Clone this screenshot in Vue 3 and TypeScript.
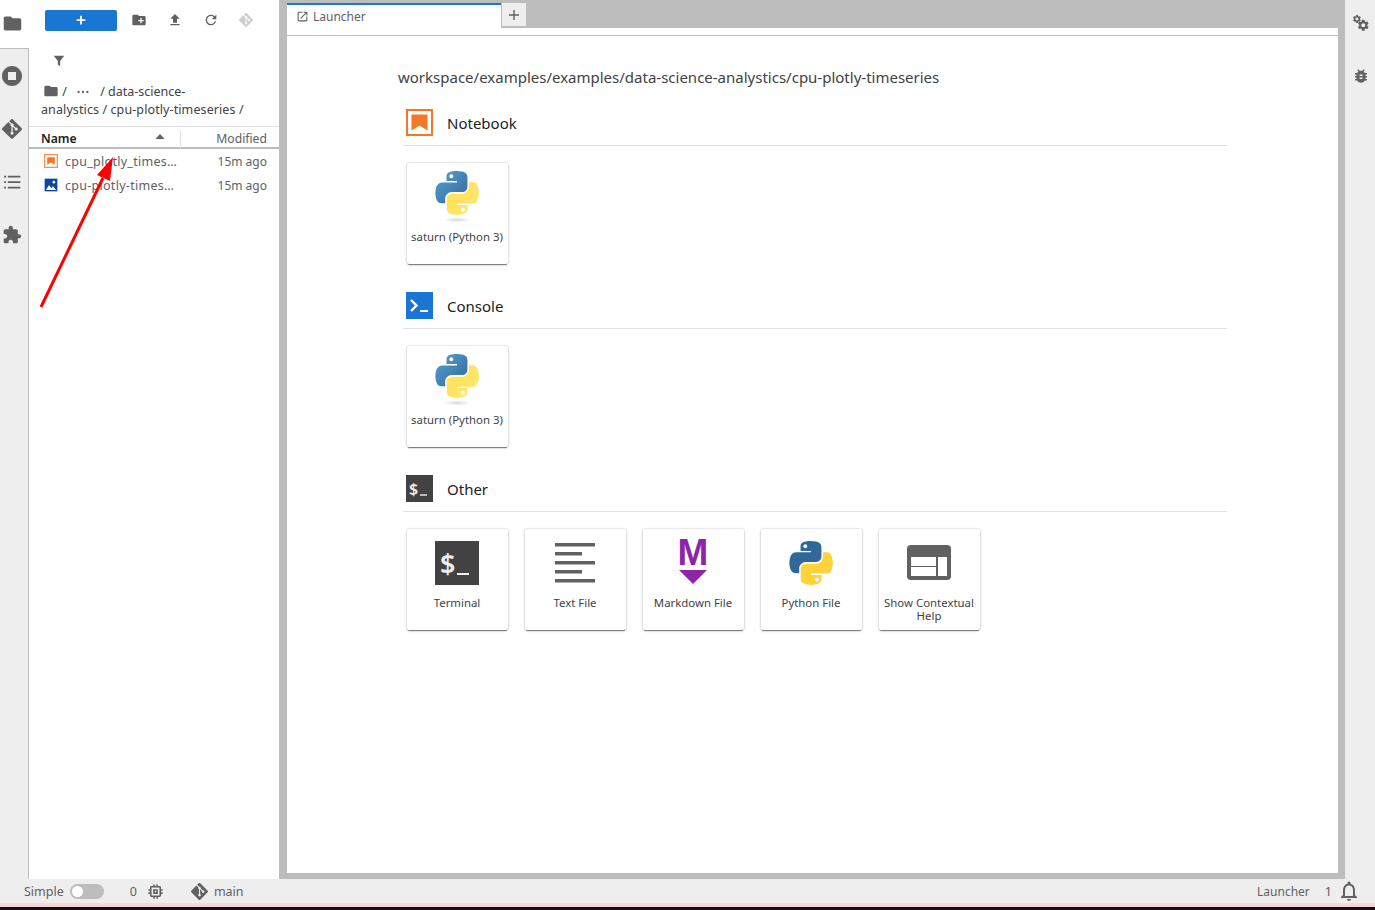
<script setup lang="ts">
type Launcher = { label: string; icon: string }
type Section = { title: string; icon: string; cards: Launcher[] }

const PY_BLUE =
  'M54.9 0c-4.6 0-9 .4-12.8 1.1C30.8 3.1 28.8 7.2 28.8 14.9v10.1h26.1v3.4H19c-7.6 0-14.2 4.6-16.3 13.2C.3 51.5.2 57.6 2.7 67.7c1.9 7.5 6.2 12.9 13.8 12.9h9v-12c0-8.7 7.5-16.3 16.4-16.3h26.1c7.3 0 13.1-6 13.1-13.3V14.9c0-7.1-6-12.4-13.1-13.6C63.4.5 59.5 0 54.9 0zM40.8 8c2.7 0 4.9 2.2 4.9 5 0 2.7-2.2 4.9-4.9 4.9-2.7 0-4.9-2.2-4.9-4.9 0-2.8 2.2-5 4.9-5z'
const PY_YELLOW =
  'M84.8 28.4V40c0 9-7.6 16.6-16.4 16.6H42.4c-7.2 0-13.1 6.1-13.1 13.3v24.9c0 7.1 6.2 11.3 13.1 13.3 8.3 2.4 16.2 2.9 26.1 0 6.6-1.9 13.1-5.8 13.1-13.3v-10H55.5v-3.3h39.1c7.6 0 10.4-5.3 13.1-13.3 2.7-8.2 2.7-16.2 0-26.9-1.9-7.7-5.5-13.3-13.1-13.3H84.8zM70.1 91.6c2.7 0 4.9 2.2 4.9 4.9 0 2.8-2.2 5-4.9 5-2.7 0-4.9-2.2-4.9-5 0-2.7 2.2-4.9 4.9-4.9z'
const GIT =
  'M23.546 10.93L13.067.452c-.604-.603-1.582-.603-2.188 0L8.708 2.627l2.76 2.76c.645-.215 1.379-.07 1.889.441.516.515.658 1.258.438 1.9l2.658 2.66c.645-.223 1.387-.078 1.9.435.721.72.721 1.884 0 2.604-.719.719-1.881.719-2.6 0-.539-.541-.674-1.337-.404-1.996L12.86 8.955v6.525c.176.086.342.203.488.348.713.721.713 1.883 0 2.6-.719.721-1.889.721-2.609 0-.719-.719-.719-1.879 0-2.598.182-.18.387-.316.605-.406V8.835c-.217-.091-.424-.222-.6-.401-.545-.545-.676-1.342-.396-2.009L7.636 3.7.45 10.881c-.6.605-.6 1.584 0 2.189l10.48 10.477c.604.604 1.582.604 2.186 0l10.43-10.43c.605-.603.605-1.582 0-2.187'
const COG =
  'M19.14 12.94c.04-.3.06-.61.06-.94 0-.32-.02-.64-.07-.94l2.03-1.58c.18-.14.23-.41.12-.61l-1.92-3.32c-.12-.22-.37-.29-.59-.22l-2.39.96c-.5-.38-1.03-.7-1.62-.94l-.36-2.54c-.04-.24-.24-.41-.48-.41h-3.84c-.24 0-.43.17-.47.41l-.36 2.54c-.59.24-1.13.57-1.62.94l-2.39-.96c-.22-.08-.47 0-.59.22L2.74 8.87c-.12.21-.08.47.12.61l2.03 1.58c-.05.3-.09.63-.09.94s.02.64.07.94l-2.03 1.58c-.18.14-.23.41-.12.61l1.92 3.32c.12.22.37.29.59.22l2.39-.96c.5.38 1.03.7 1.62.94l.36 2.54c.05.24.24.41.48.41h3.84c.24 0 .44-.17.47-.41l.36-2.54c.59-.24 1.13-.56 1.62-.94l2.39.96c.22.08.47 0 .59-.22l1.92-3.32c.12-.22.07-.47-.12-.61l-2.01-1.58zM12 15.6c-1.98 0-3.6-1.62-3.6-3.6s1.62-3.6 3.6-3.6 3.6 1.62 3.6 3.6-1.62 3.6-3.6 3.6z'

const sections: Section[] = [
  { title: 'Notebook', icon: 'notebook', cards: [{ label: 'saturn (Python 3)', icon: 'kernel' }] },
  { title: 'Console', icon: 'console', cards: [{ label: 'saturn (Python 3)', icon: 'kernel' }] },
  {
    title: 'Other',
    icon: 'terminal',
    cards: [
      { label: 'Terminal', icon: 'terminal' },
      { label: 'Text File', icon: 'text' },
      { label: 'Markdown File', icon: 'markdown' },
      { label: 'Python File', icon: 'python' },
      { label: 'Show Contextual Help', icon: 'help' },
    ],
  },
]

// names are shown shortened, the column is narrow
const files = [
  { name: 'cpu_plotly_times…', kind: 'notebook', modified: '15m ago' },
  { name: 'cpu-plotly-times…', kind: 'image', modified: '15m ago' },
]
</script>

<template>
  <div class="app">
    <div class="workspace">
      <!-- left icon rail -->
      <nav class="rail">
        <div class="rail-tab rail-tab--active">
          <svg viewBox="0 0 24 24" class="rail-icon rail-icon--folder"><path d="M10 4H4c-1.1 0-2 .9-2 2v12c0 1.1.9 2 2 2h16c1.1 0 2-.9 2-2V8c0-1.1-.9-2-2-2h-8l-2-2z" /></svg>
        </div>
        <div class="rail-tab">
          <svg viewBox="0 0 24 24" class="rail-icon rail-icon--running"><path fill-rule="evenodd" d="M12 2C6.47 2 2 6.47 2 12s4.47 10 10 10 10-4.47 10-10S17.53 2 12 2zm4 14H8V8h8v8z" /></svg>
        </div>
        <div class="rail-tab">
          <svg viewBox="0 0 24 24" class="rail-icon"><path :d="GIT" /></svg>
        </div>
        <div class="rail-tab">
          <svg viewBox="0 0 24 24" class="rail-icon"><path d="M2.5 4.4h2.4v2.2H2.5zM7 4.4h15v2.2H7zM2.5 11h2.4v2.2H2.5zM7 11h15v2.2H7zM2.5 17.6h2.4v2.2H2.5zM7 17.6h15v2.2H7z" /></svg>
        </div>
        <div class="rail-tab">
          <svg viewBox="0 0 24 24" class="rail-icon"><path d="M20.5 11H19V7c0-1.1-.9-2-2-2h-4V3.5C13 2.12 11.88 1 10.5 1S8 2.12 8 3.5V5H4c-1.1 0-1.99.9-1.99 2v3.8H3.5c1.49 0 2.7 1.21 2.7 2.7s-1.21 2.7-2.7 2.7H2V20c0 1.1.9 2 2 2h3.8v-1.5c0-1.49 1.21-2.7 2.7-2.7 1.49 0 2.7 1.21 2.7 2.7V22H17c1.1 0 2-.9 2-2v-4h1.5c1.38 0 2.5-1.12 2.5-2.5S21.88 11 20.5 11z" /></svg>
        </div>
      </nav>

      <!-- file browser -->
      <aside class="browser">
        <div class="toolbar">
          <button class="new-btn">
            <svg viewBox="0 0 16 16" class="plus"><path d="M7 3h2v4h4v2H9v4H7V9H3V7h4z" /></svg>
          </button>
          <svg viewBox="0 0 24 24" class="tool-icon"><path d="M20 6h-8l-2-2H4c-1.11 0-1.99.89-1.99 2L2 18c0 1.11.89 2 2 2h16c1.11 0 2-.89 2-2V8c0-1.11-.89-2-2-2zm-1 8h-3v3h-2v-3h-3v-2h3V9h2v3h3v2z" /></svg>
          <svg viewBox="0 0 24 24" class="tool-icon"><path d="M9 16h6v-6h4l-7-7-7 7h4zm-4 2h14v2H5z" /></svg>
          <svg viewBox="0 0 24 24" class="tool-icon"><path d="M17.65 6.35C16.2 4.9 14.21 4 12 4c-4.42 0-7.99 3.58-7.99 8s3.57 8 7.99 8c3.73 0 6.84-2.55 7.73-6h-2.08c-.82 2.33-3.04 4-5.65 4-3.31 0-6-2.69-6-6s2.69-6 6-6c1.66 0 3.14.69 4.22 1.78L13 11h7V4l-2.35 2.35z" /></svg>
          <svg viewBox="0 0 24 24" class="tool-icon tool-icon--faded"><path :d="GIT" /></svg>
        </div>
        <div class="filter">
          <svg viewBox="0 0 24 24"><path d="M14 12v9l-4-3v-6L3 3h18z" /></svg>
        </div>
        <div class="crumbs">
          <div>
            <svg viewBox="0 0 24 24" class="crumb-folder"><path d="M10 4H4c-1.1 0-2 .9-2 2v12c0 1.1.9 2 2 2h16c1.1 0 2-.9 2-2V8c0-1.1-.9-2-2-2h-8l-2-2z" /></svg>
            <span> / </span>
            <svg viewBox="0 0 16 16" class="crumb-dots"><circle cx="3" cy="8" r="1.3" /><circle cx="8" cy="8" r="1.3" /><circle cx="13" cy="8" r="1.3" /></svg>
            <span>/ data-science-</span>
          </div>
          <div class="crumb-line">analystics / cpu-plotly-timeseries /</div>
        </div>
        <div class="list-head">
          <div class="head-name">
            <span>Name</span>
            <svg viewBox="0 0 10 6" class="sort"><path d="M5 0l4.5 5H.5z" /></svg>
          </div>
          <div class="head-mod">Modified</div>
        </div>
        <div v-for="f in files" :key="f.name" class="file-row">
          <svg v-if="f.kind === 'notebook'" viewBox="0 0 22 22" class="file-icon">
            <rect x="1" y="1" width="20" height="20" fill="#fff" stroke="#f37726" stroke-width="2" opacity=".8" />
            <path d="M5 5h12v12l-6-3.5L5 17z" fill="#f37726" />
          </svg>
          <svg v-else viewBox="0 0 22 22" class="file-icon">
            <rect x="1" y="1" width="20" height="20" fill="#0d47a1" />
            <circle cx="15.5" cy="6.5" r="2" fill="#fff" />
            <path d="M3 19l5-8 3.5 5 2.5-3 5 6z" fill="#fff" />
          </svg>
          <span class="file-name">{{ f.name }}</span>
          <span class="file-mod">{{ f.modified }}</span>
        </div>
      </aside>

      <div class="splitter"></div>

      <!-- launcher -->
      <main class="main">
        <div class="tabbar">
          <div class="tab">
            <svg viewBox="0 0 24 24" class="tab-icon"><path d="M19 19H5V5h7V3H5a2 2 0 0 0-2 2v14c0 1.1.9 2 2 2h14c1.1 0 2-.9 2-2v-7h-2v7zM14 3v2h3.59l-9.83 9.83 1.41 1.41L19 6.41V10h2V3h-7z" /></svg>
            <span>Launcher</span>
          </div>
          <div class="tab-add">
            <svg viewBox="0 0 16 16"><path d="M7.3 3h1.4v4.3H13v1.4H8.7V13H7.3V8.7H3V7.3h4.3z" /></svg>
          </div>
        </div>
        <div class="launcher">
          <div class="cwd">workspace/examples/examples/data-science-analystics/cpu-plotly-timeseries</div>
          <section v-for="s in sections" :key="s.title" class="section">
            <div class="section-head">
              <svg v-if="s.icon === 'notebook'" viewBox="0 0 27 27" class="section-icon">
                <rect x="1" y="1" width="25" height="25" fill="#fff" stroke="#f37726" stroke-width="2" />
                <path d="M5.5 5.5h16v16l-8-5-8 5z" fill="#f37726" />
              </svg>
              <svg v-else-if="s.icon === 'console'" viewBox="0 0 27 27" class="section-icon">
                <rect width="27" height="27" fill="#1976d2" />
                <path d="M5 8l5.5 5.5L5 19" fill="none" stroke="#fff" stroke-width="2.4" />
                <path d="M14 19h8" stroke="#fff" stroke-width="2" />
              </svg>
              <svg v-else viewBox="0 0 27 27" class="section-icon">
                <rect width="27" height="27" fill="#424242" />
                <text x="3" y="20" class="term-text" font-size="16">$</text>
                <path d="M14 20h7" stroke="#eee" stroke-width="1.4" />
              </svg>
              <span class="section-title">{{ s.title }}</span>
            </div>
            <div class="cards">
              <div v-for="c in s.cards" :key="c.label" class="card">
                <div class="card-art">
                  <svg v-if="c.icon === 'kernel'" viewBox="0 0 110 132" class="art-kernel">
                    <defs>
                      <linearGradient id="pyb" x1="0" y1="0" x2="1" y2="1">
                        <stop offset="0" stop-color="#5a9fd4" />
                        <stop offset="1" stop-color="#306998" />
                      </linearGradient>
                      <linearGradient id="pyy" x1="0" y1="0" x2="1" y2="1">
                        <stop offset="0" stop-color="#ffe052" />
                        <stop offset="1" stop-color="#ffe873" />
                      </linearGradient>
                      <radialGradient id="pys">
                        <stop offset="0" stop-color="#b8b8b8" stop-opacity=".55" />
                        <stop offset="1" stop-color="#b8b8b8" stop-opacity="0" />
                      </radialGradient>
                    </defs>
                    <path :d="PY_BLUE" fill="url(#pyb)" />
                    <path :d="PY_YELLOW" fill="url(#pyy)" />
                    <ellipse cx="55" cy="122" rx="34" ry="7" fill="url(#pys)" />
                  </svg>
                  <svg v-else-if="c.icon === 'terminal'" viewBox="0 0 44 44" class="art">
                    <rect width="44" height="44" fill="#424242" />
                    <text x="5" y="33" class="term-text" font-size="27">$</text>
                    <path d="M22 33h12" stroke="#eee" stroke-width="2" />
                  </svg>
                  <svg v-else-if="c.icon === 'text'" viewBox="0 0 44 44" class="art">
                    <path d="M2 2h40v3.6H2zM2 11h27v3.6H2zM2 20h40v3.6H2zM2 29h27v3.6H2zM2 38h40v3.6H2z" fill="#616161" />
                  </svg>
                  <svg v-else-if="c.icon === 'markdown'" viewBox="0 0 44 46" class="art art--md">
                    <text x="22" y="26" text-anchor="middle" class="md-text">M</text>
                    <path d="M8 31h28L22 45z" fill="#8e24aa" />
                  </svg>
                  <svg v-else-if="c.icon === 'python'" viewBox="0 0 110 110" class="art">
                    <path :d="PY_BLUE" fill="#306998" />
                    <path :d="PY_YELLOW" fill="#ffd43b" />
                  </svg>
                  <svg v-else viewBox="0 0 44 44" class="art">
                    <rect x="0" y="4" width="44" height="35" rx="4" fill="#616161" />
                    <path d="M4 16h25v9H4zM4 26h25v9H4zM31 16h9v19h-9z" fill="#fff" />
                  </svg>
                </div>
                <div class="card-label">{{ c.label }}</div>
              </div>
            </div>
          </section>
        </div>
      </main>

      <div class="splitter splitter--right"></div>

      <nav class="rail-right">
        <svg viewBox="0 0 24 24" class="gears">
          <path :d="COG" transform="scale(.55)" />
          <path :d="COG" transform="translate(6 6) scale(.75)" />
        </svg>
        <svg viewBox="0 0 24 24" class="bug"><path d="M20 8h-2.81c-.45-.78-1.07-1.45-1.82-1.96L17 4.41 15.59 3l-2.17 2.17C12.96 5.06 12.49 5 12 5c-.49 0-.96.06-1.41.17L8.41 3 7 4.41l1.62 1.63C7.88 6.55 7.26 7.22 6.81 8H4v2h2.09c-.05.33-.09.66-.09 1v1H4v2h2v1c0 .34.04.67.09 1H4v2h2.81c1.04 1.79 2.97 3 5.19 3s4.15-1.21 5.19-3H20v-2h-2.09c.05-.33.09-.66.09-1v-1h2v-2h-2v-1c0-.34-.04-.67-.09-1H20V8zm-6 8h-4v-2h4v2zm0-4h-4v-2h4v2z" /></svg>
      </nav>
    </div>

    <footer class="status">
      <span>Simple</span>
      <span class="toggle"><i></i></span>
      <span class="status-zero">0</span>
      <svg viewBox="0 0 24 24" class="status-chip"><path d="M15 9H9v6h6V9zm-2 4h-2v-2h2v2zm8-2V9h-2V7c0-1.1-.9-2-2-2h-2V3h-2v2h-2V3H9v2H7c-1.1 0-2 .9-2 2v2H3v2h2v2H3v2h2v2c0 1.1.9 2 2 2h2v2h2v-2h2v2h2v-2h2c1.1 0 2-.9 2-2v-2h2v-2h-2v-2h2zm-4 6H7V7h10v10z" /></svg>
      <svg viewBox="0 0 24 24" class="status-git"><path :d="GIT" /></svg>
      <span class="status-branch">main</span>
      <span class="status-spacer"></span>
      <span class="status-label">Launcher</span>
      <span class="status-one">1</span>
      <svg viewBox="0 0 24 24" class="status-bell"><path d="M12 22c1.1 0 2-.9 2-2h-4c0 1.1.9 2 2 2zm6-6v-5c0-3.07-1.63-5.64-4.5-6.32V4c0-.83-.67-1.5-1.5-1.5s-1.5.67-1.5 1.5v.68C7.64 5.36 6 7.92 6 11v5l-2 2v1h16v-1l-2-2zm-2 1H8v-6c0-2.48 1.51-4.5 4-4.5s4 2.02 4 4.5v6z" /></svg>
    </footer>
    <div class="pink"></div>
    <div class="black"></div>

    <!-- annotation drawn over the screenshot -->
    <svg class="arrow" viewBox="0 0 1375 910">
      <path d="M41 307L103 178" stroke="#ff0000" stroke-width="3" fill="none" />
      <path d="M113 157L97 175L110 181z" fill="#ff0000" />
    </svg>
  </div>
</template>

<style scoped>
.app {
  position: relative;
  display: flex;
  flex-direction: column;
  width: 1375px;
  height: 910px;
  overflow: hidden;
  font-family: 'Noto Sans', sans-serif;
  font-size: 13px;
  color: #424242;
  background: #fff;
}

.workspace {
  display: flex;
  height: 879px;
}

.rail {
  flex: none;
  width: 28px;
  background: #eee;
  border-right: 1px solid #bdbdbd;
  display: flex;
  flex-direction: column;
}

.rail-tab {
  display: flex;
  align-items: center;
  justify-content: center;
  width: 24px;
  height: 53px;
}

.rail-tab--active {
  width: 29px;
  height: 49px;
  margin-right: -1px;
  padding: 0 5px 2px 0;
  box-sizing: border-box;
  background: #fff;
  border-bottom: 1px solid #bdbdbd;
  position: relative;
  z-index: 1;
}

.rail-icon {
  flex: none;
  width: 20px;
  height: 20px;
  fill: #616161;
}

.rail-icon--folder {
  width: 21px;
  height: 21px;
}

.rail-icon--running {
  width: 24px;
  height: 24px;
}

.browser {
  flex: none;
  width: 250px;
  background: #fff;
}

.toolbar {
  display: flex;
  align-items: center;
  height: 40px;
  padding-left: 16px;
}

.new-btn {
  width: 72px;
  height: 21px;
  margin-right: 14px;
  padding: 0;
  border: 0;
  border-radius: 2px;
  background: #1976d2;
  display: flex;
  align-items: center;
  justify-content: center;
}

.plus {
  width: 14px;
  height: 14px;
  fill: #fff;
}

.tool-icon {
  width: 16px;
  height: 16px;
  margin-right: 20px;
  fill: #616161;
}

.tool-icon--faded {
  width: 14px;
  height: 14px;
  opacity: 0.3;
}

.filter {
  height: 18px;
  padding: 14px 0 0 23px;
}

.filter svg {
  display: block;
  width: 14px;
  height: 14px;
  fill: #616161;
}

.crumbs {
  height: 54px;
  padding: 12px 0 0 12px;
  box-sizing: border-box;
  margin-top: -1px;
  font-size: 12.5px;
  line-height: 18px;
  white-space: nowrap;
}

.crumb-line {
  letter-spacing: 0.1px;
}

.crumb-folder {
  width: 16px;
  height: 16px;
  fill: #616161;
  vertical-align: -3px;
  margin-left: 2px;
}

.crumb-dots {
  width: 14px;
  height: 14px;
  fill: #616161;
  vertical-align: -3px;
  margin: 0 10px 0 6px;
}

.list-head {
  display: flex;
  height: 20px;
  border-top: 1px solid #e0e0e0;
  border-bottom: 2px solid #bdbdbd;
  margin-top: 1px;
  align-items: center;
  font-size: 12.2px;
}

.head-name {
  display: flex;
  align-items: center;
  justify-content: space-between;
  width: 152px;
  height: 18px;
  margin-top: 3px;
  box-sizing: border-box;
  padding: 0 15px 0 12px;
  border-right: 1px solid #e0e0e0;
  font-weight: 600;
  color: #212121;
}

.sort {
  width: 10px;
  height: 6px;
  fill: #616161;
  margin-bottom: 3px;
}

.head-mod {
  flex: 1;
  text-align: right;
  padding-right: 12px;
  margin-top: 3px;
  color: #616161;
}

.file-row {
  display: flex;
  align-items: center;
  height: 24px;
  padding: 0 12px 0 15px;
  font-size: 12px;
  color: #616161;
}

.file-icon {
  flex: none;
  width: 14px;
  height: 14px;
  margin-right: 7px;
}

.file-name {
  font-size: 12.5px;
  letter-spacing: 0.28px;
  white-space: nowrap;
}

.file-mod {
  margin-left: auto;
}

.splitter {
  flex: none;
  width: 8px;
  background: #bdbdbd;
}

.splitter--right {
  width: 7px;
}

.main {
  flex: none;
  width: 1051px;
  display: flex;
  flex-direction: column;
  border-bottom: 6px solid #bdbdbd;
  box-sizing: border-box;
}

.tabbar {
  display: flex;
  height: 36px;
  box-sizing: border-box;
  flex: none;
  background: linear-gradient(#bdbdbd 0 28px, #fff 28px);
  border-bottom: 1px solid #bdbdbd;
}

.tab {
  display: flex;
  align-items: center;
  gap: 4px;
  width: 214px;
  height: 32px;
  margin-top: 3px;
  padding: 0 0 7px 9px;
  box-sizing: border-box;
  background: #fff;
  border-top: 2px solid #1976d2;
  font-size: 12px;
  color: #616161;
}

.tab-icon {
  width: 13px;
  height: 13px;
  fill: #616161;
}

.tab-add {
  display: flex;
  align-items: center;
  justify-content: center;
  width: 25px;
  height: 24px;
  margin-top: 3px;
  background: #eee;
  border-left: 1px solid #bdbdbd;
  border-bottom: 1px solid #bdbdbd;
  box-sizing: border-box;
}

.tab-add svg {
  width: 16px;
  height: 16px;
  fill: #616161;
}

.launcher {
  flex: 1;
  padding: 31px 111px 0 111px;
}

.cwd {
  font-size: 15px;
  line-height: 20px;
  color: #424242;
  margin-bottom: 22px;
  white-space: nowrap;
}

.section {
  width: 824px;
  margin-left: 5px;
}

.section-head {
  display: flex;
  align-items: center;
  height: 27px;
  border-bottom: 1px solid #e0e0e0;
  padding: 0 0 9px 3px;
}

.section-icon {
  flex: none;
  width: 27px;
  height: 27px;
}

.section-title {
  margin-left: 14px;
  font-size: 15px;
  color: #212121;
}

.cards {
  display: flex;
  gap: 17px;
  padding: 17px 0 28px 3.5px;
}

.card {
  width: 101px;
  height: 101px;
  box-sizing: border-box;
  background: #fff;
  box-shadow: 0 0 2px rgb(0 0 0 / 25%), 0 2px 1px -1px rgb(0 0 0 / 45%), 0 1px 3px rgb(0 0 0 / 15%);
  border-radius: 2px;
}

.card-art {
  display: flex;
  justify-content: center;
  height: 60px;
  box-sizing: border-box;
  padding-top: 8px;
}

.art {
  flex: none;
  width: 44px;
  height: 44px;
  margin-top: 4px;
  overflow: visible;
}

.art--md {
  height: 46px;
  margin-top: 2px;
}

.art-kernel {
  flex: none;
  width: 44px;
  height: 53px;
}

.card-label {
  margin-top: 7px;
  padding: 0 4px;
  text-align: center;
  font-size: 11.4px;
  line-height: 13px;
  color: #424242;
}

.term-text {
  fill: #eee;
  font-family: 'Noto Sans', sans-serif;
  font-weight: 600;
}

.md-text {
  fill: #8e24aa;
  font-family: 'Liberation Sans', sans-serif;
  font-weight: 700;
  font-size: 37px;
}

.rail-right {
  flex: 1;
  background: #eee;
  display: flex;
  flex-direction: column;
  align-items: center;
}

.gears {
  width: 18px;
  height: 18px;
  margin: 14px 0 0 2px;
  fill: #616161;
}

.bug {
  width: 18px;
  height: 18px;
  margin: 35px 0 0 2px;
  fill: #616161;
}

.status {
  display: flex;
  align-items: center;
  height: 24px;
  padding: 0 14px 0 24px;
  background: #eee;
  font-size: 12.5px;
  color: #616161;
}

.toggle {
  width: 34px;
  height: 15px;
  margin-left: 6px;
  border-radius: 8px;
  background: #bdbdbd;
  display: flex;
  align-items: center;
  padding-left: 2px;
  box-sizing: border-box;
}

.toggle i {
  width: 11px;
  height: 11px;
  border-radius: 50%;
  background: #fff;
}

.status-zero {
  margin-left: 26px;
}

.status-chip {
  width: 19px;
  height: 19px;
  margin-left: 9px;
  fill: #616161;
}

.status-git {
  width: 17px;
  height: 17px;
  margin-left: 26px;
  fill: #616161;
}

.status-branch {
  margin-left: 6px;
}

.status-spacer {
  flex: 1;
}

.status-label {
  font-size: 12px;
}

.status-one {
  margin-left: 15px;
}

.status-bell {
  width: 24px;
  height: 24px;
  margin-left: 5px;
  fill: #616161;
}

.pink {
  height: 4px;
  background: #f8d7da;
}

.black {
  height: 3px;
  background: #111;
}

.arrow {
  position: absolute;
  left: 0;
  top: 0;
  width: 1375px;
  height: 910px;
  pointer-events: none;
}
</style>

<style>
html,
body {
  margin: 0;
  overflow: hidden;
}
</style>
